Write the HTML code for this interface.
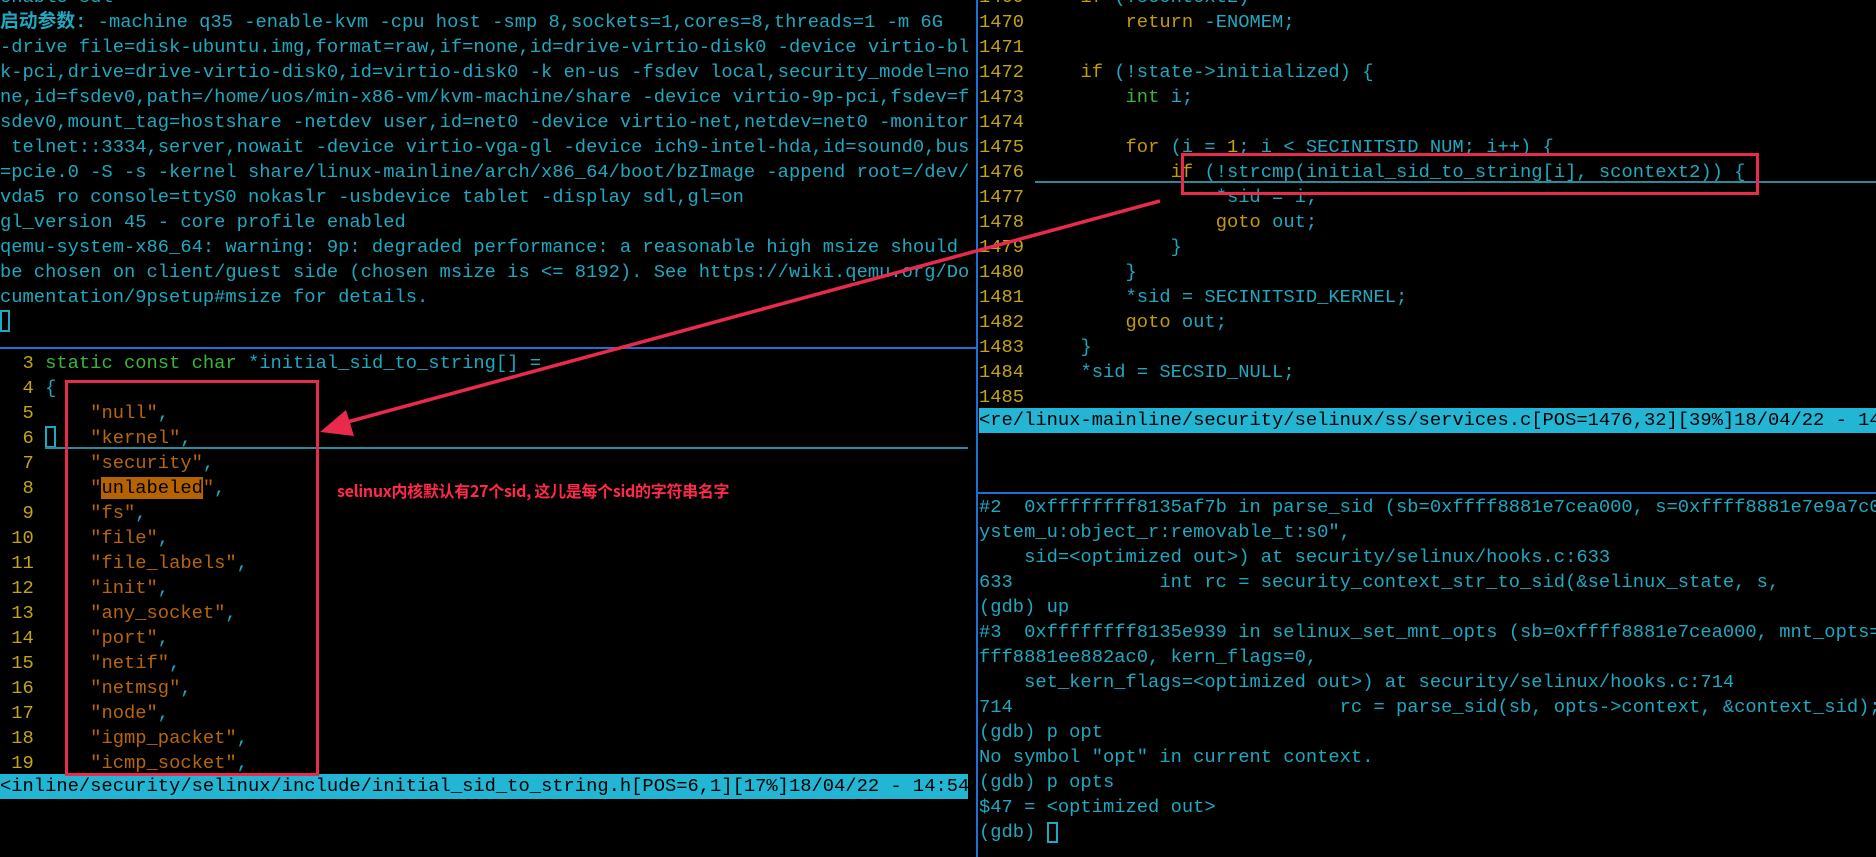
<!DOCTYPE html>
<html><head><meta charset="utf-8"><style>
*{margin:0;padding:0;box-sizing:border-box}
body{width:1876px;height:857px;background:#000;overflow:hidden;position:relative;font-family:"Liberation Mono","Noto Sans CJK SC",monospace;font-size:18.8px;color:#1fa8c0}
.l{position:absolute;white-space:pre;height:25px;line-height:25px}
.n{color:#c2a414}
.s{color:#b8660a}
.k{color:#c49a00}
.t{color:#3cb43c}
.bar{position:absolute;background:#22b5d4;color:#000;white-space:pre;line-height:25px;height:25px;overflow:hidden}
.box{position:absolute;border:3px solid #ea2a4c}
</style></head><body>
<div style="position:absolute;left:0;top:0;width:976px;height:350px">
<div class="l" style="top:-15px">enable sdl</div>
<div class="l" style="top:10px"><b>启动参数:</b> -machine q35 -enable-kvm -cpu host -smp 8,sockets=1,cores=8,threads=1 -m 6G</div>
<div class="l" style="top:35px">-drive file=disk-ubuntu.img,format=raw,if=none,id=drive-virtio-disk0 -device virtio-bl</div>
<div class="l" style="top:60px">k-pci,drive=drive-virtio-disk0,id=virtio-disk0 -k en-us -fsdev local,security_model=no</div>
<div class="l" style="top:85px">ne,id=fsdev0,path=/home/uos/min-x86-vm/kvm-machine/share -device virtio-9p-pci,fsdev=f</div>
<div class="l" style="top:110px">sdev0,mount_tag=hostshare -netdev user,id=net0 -device virtio-net,netdev=net0 -monitor</div>
<div class="l" style="top:135px"> telnet::3334,server,nowait -device virtio-vga-gl -device ich9-intel-hda,id=sound0,bus</div>
<div class="l" style="top:160px">=pcie.0 -S -s -kernel share/linux-mainline/arch/x86_64/boot/bzImage -append root=/dev/</div>
<div class="l" style="top:185px">vda5 ro console=ttyS0 nokaslr -usbdevice tablet -display sdl,gl=on</div>
<div class="l" style="top:210px">gl_version 45 - core profile enabled</div>
<div class="l" style="top:235px">qemu-system-x86_64: warning: 9p: degraded performance: a reasonable high msize should</div>
<div class="l" style="top:260px">be chosen on client/guest side (chosen msize is &lt;= 8192). See https://wiki.qemu.org/Do</div>
<div class="l" style="top:285px">cumentation/9psetup#msize for details.</div>
<div style="position:absolute;left:0;top:310px;width:10px;height:22px;border:2px solid #1fa8c0"></div>
</div>
<div style="position:absolute;left:0;top:347px;width:976px;height:2px;background:#1e6fd6"></div>
<div style="position:absolute;left:976px;top:0;width:2px;height:857px;background:#1e6fd6"></div>
<div style="position:absolute;left:978px;top:492px;width:898px;height:2px;background:#1e6fd6"></div>

<div class="l" style="top:351px"><span class="n">  3</span> <span class="t">static const char</span> *initial_sid_to_string[] =</div>
<div class="l" style="top:376px"><span class="n">  4</span> {</div>
<div class="l" style="top:401px"><span class="n">  5</span>     <span class="s">"null"</span>,</div>
<div class="l" style="top:426px"><span class="n">  6</span>     <span class="s">"kernel"</span>,</div>
<div style="position:absolute;left:45px;top:426px;width:11px;height:22px;border:2px solid #1fa8c0"></div>
<div style="position:absolute;left:45px;top:447px;width:923px;height:2px;background:#2a8a9a"></div>
<div class="l" style="top:451px"><span class="n">  7</span>     <span class="s">"security"</span>,</div>
<div class="l" style="top:476px"><span class="n">  8</span>     <span class="s">"<span style="background:#b56200;color:#000">unlabeled</span>"</span>,</div>
<div class="l" style="top:501px"><span class="n">  9</span>     <span class="s">"fs"</span>,</div>
<div class="l" style="top:526px"><span class="n"> 10</span>     <span class="s">"file"</span>,</div>
<div class="l" style="top:551px"><span class="n"> 11</span>     <span class="s">"file_labels"</span>,</div>
<div class="l" style="top:576px"><span class="n"> 12</span>     <span class="s">"init"</span>,</div>
<div class="l" style="top:601px"><span class="n"> 13</span>     <span class="s">"any_socket"</span>,</div>
<div class="l" style="top:626px"><span class="n"> 14</span>     <span class="s">"port"</span>,</div>
<div class="l" style="top:651px"><span class="n"> 15</span>     <span class="s">"netif"</span>,</div>
<div class="l" style="top:676px"><span class="n"> 16</span>     <span class="s">"netmsg"</span>,</div>
<div class="l" style="top:701px"><span class="n"> 17</span>     <span class="s">"node"</span>,</div>
<div class="l" style="top:726px"><span class="n"> 18</span>     <span class="s">"igmp_packet"</span>,</div>
<div class="l" style="top:751px"><span class="n"> 19</span>     <span class="s">"icmp_socket"</span>,</div>
<div class="bar" style="left:0;top:774px;width:968px">&lt;inline/security/selinux/include/initial_sid_to_string.h[POS=6,1][17%]18/04/22 - 14:54</div>
<div class="box" style="left:65px;top:380px;width:254px;height:396px"></div>
<div style="position:absolute;left:337px;top:478px;color:#ff2a4a;font-family:'Noto Sans CJK SC',sans-serif;font-size:16px;font-weight:bold;white-space:nowrap;letter-spacing:-0.3px">selinux内核默认有27个sid, 这儿是每个sid的字符串名字</div>

<div style="position:absolute;left:979px;top:0;width:897px;height:440px;overflow:hidden">
<div class="l" style="top:-15px"><span class="n">1469</span>     <span class="k">if</span> (!scontext2)</div>
<div class="l" style="top:10px"><span class="n">1470</span>         <span class="k">return</span> -ENOMEM;</div>
<div class="l" style="top:35px"><span class="n">1471</span></div>
<div class="l" style="top:60px"><span class="n">1472</span>     <span class="k">if</span> (!state-&gt;initialized) {</div>
<div class="l" style="top:85px"><span class="n">1473</span>         <span class="t">int</span> i;</div>
<div class="l" style="top:110px"><span class="n">1474</span></div>
<div class="l" style="top:135px"><span class="n">1475</span>         <span class="k">for</span> (i = <span class="n">1</span>; i &lt; SECINITSID_NUM; i++) {</div>
<div class="l" style="top:160px"><span class="n">1476</span>             <span class="k">if</span> (!strcmp(initial_sid_to_string[i], scontext2)) {</div>
<div style="position:absolute;left:56px;top:181px;width:841px;height:2px;background:#2a8a9a"></div>
<div class="l" style="top:185px"><span class="n">1477</span>                 *sid = i;</div>
<div class="l" style="top:210px"><span class="n">1478</span>                 <span class="k">goto</span> out;</div>
<div class="l" style="top:235px"><span class="n">1479</span>             }</div>
<div class="l" style="top:260px"><span class="n">1480</span>         }</div>
<div class="l" style="top:285px"><span class="n">1481</span>         *sid = SECINITSID_KERNEL;</div>
<div class="l" style="top:310px"><span class="n">1482</span>         <span class="k">goto</span> out;</div>
<div class="l" style="top:335px"><span class="n">1483</span>     }</div>
<div class="l" style="top:360px"><span class="n">1484</span>     *sid = SECSID_NULL;</div>
<div class="l" style="top:385px"><span class="n">1485</span></div>
<div class="bar" style="left:0;top:408px;width:897px">&lt;re/linux-mainline/security/selinux/ss/services.c[POS=1476,32][39%]18/04/22 - 14:54</div>
</div>
<div class="box" style="left:1181px;top:153px;width:578px;height:42px"></div>

<div style="position:absolute;left:979px;top:495px;width:897px;height:362px;overflow:hidden">
<div class="l" style="top:0px">#2  0xffffffff8135af7b in parse_sid (sb=0xffff8881e7cea000, s=0xffff8881e7e9a7c0 "s</div>
<div class="l" style="top:25px">ystem_u:object_r:removable_t:s0",</div>
<div class="l" style="top:50px">    sid=&lt;optimized out&gt;) at security/selinux/hooks.c:633</div>
<div class="l" style="top:75px">633             int rc = security_context_str_to_sid(&amp;selinux_state, s,</div>
<div class="l" style="top:100px">(gdb) up</div>
<div class="l" style="top:125px">#3  0xffffffff8135e939 in selinux_set_mnt_opts (sb=0xffff8881e7cea000, mnt_opts=0xf</div>
<div class="l" style="top:150px">fff8881ee882ac0, kern_flags=0,</div>
<div class="l" style="top:175px">    set_kern_flags=&lt;optimized out&gt;) at security/selinux/hooks.c:714</div>
<div class="l" style="top:200px">714                             rc = parse_sid(sb, opts-&gt;context, &amp;context_sid);</div>
<div class="l" style="top:225px">(gdb) p opt</div>
<div class="l" style="top:250px">No symbol "opt" in current context.</div>
<div class="l" style="top:275px">(gdb) p opts</div>
<div class="l" style="top:300px">$47 = &lt;optimized out&gt;</div>
<div class="l" style="top:325px">(gdb) </div>
<div style="position:absolute;left:68px;top:327px;width:11px;height:21px;border:2px solid #1fa8c0"></div>
</div>

<svg style="position:absolute;left:0;top:0" width="1876" height="857">
<line x1="1160" y1="201" x2="340" y2="424" stroke="#ea2a4c" stroke-width="3.5"/>
<polygon points="320,432 346,410 354,436" fill="#ea2a4c"/>
</svg>
</body></html>
